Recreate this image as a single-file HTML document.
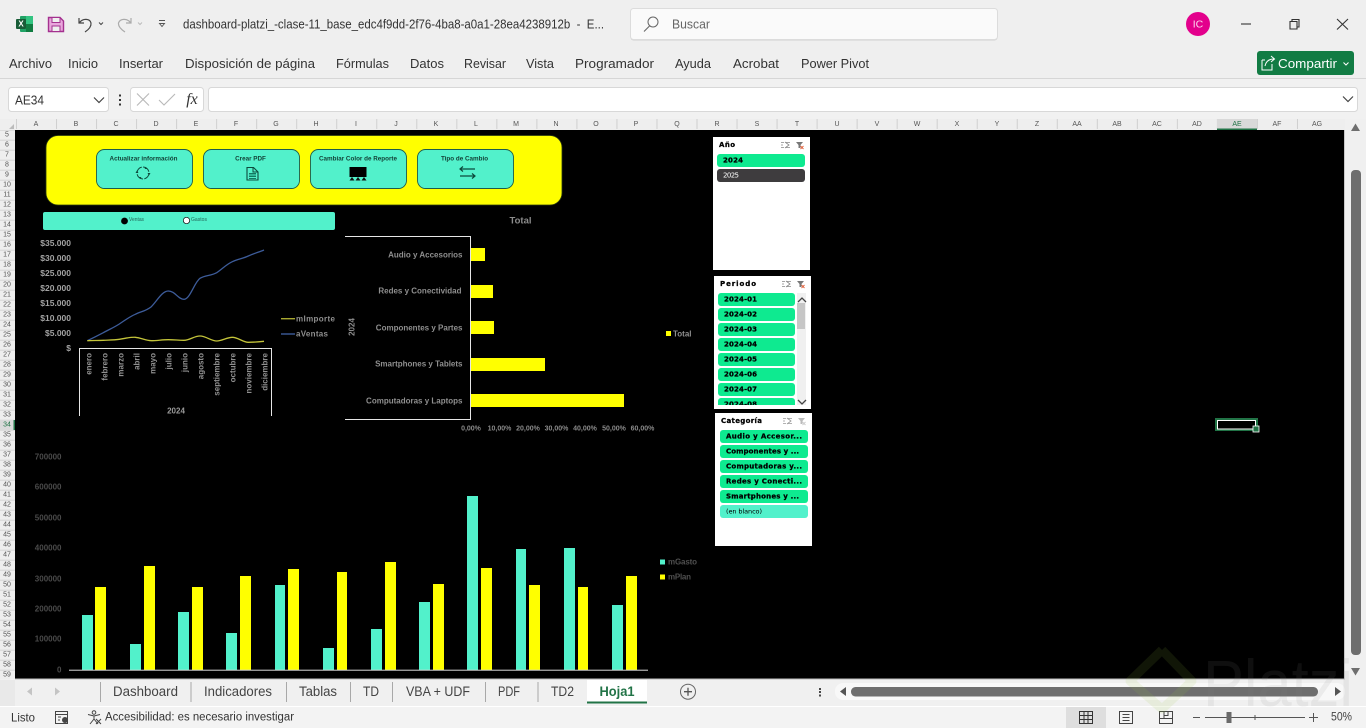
<!DOCTYPE html>
<html lang="es"><head><meta charset="utf-8"><title>Excel</title>
<style>
html,body{margin:0;padding:0;width:1366px;height:728px;overflow:hidden;background:#f0f0f0}
svg{display:block;font-family:"Liberation Sans",sans-serif}
text{dominant-baseline:central}
.ui{font-size:13px;fill:#3a3a3a}
.m text{font-size:13px;fill:#333}
.c text{font-size:7px;fill:#555;text-anchor:middle}
.r text{font-size:7px;fill:#555;text-anchor:middle}
.ax text{font-size:8.5px;font-weight:bold;fill:#a2a2a2}
.lb text{font-size:8px;font-weight:bold;fill:#8f8f8f}
.bt{font-size:6.3px;font-weight:bold;fill:#123f35;text-anchor:middle}
.sl{font-family:"DejaVu Sans",sans-serif;font-size:7px;font-weight:bold;fill:#000;stroke:#000;stroke-width:.25px}
.sb{fill:#0eea90}
.tb text{font-size:13.5px;fill:#444;text-anchor:middle}
</style></head><body>
<svg width="1366" height="728" viewBox="0 0 1366 728" xmlns="http://www.w3.org/2000/svg">
<defs>
<pattern id="colp" x="16" y="0" width="40.03" height="20" patternUnits="userSpaceOnUse"><rect width="1" height="20" fill="#cfcfcf"/></pattern>
<pattern id="rowp" x="0" y="129.7" width="20" height="10" patternUnits="userSpaceOnUse"><rect width="20" height="1" fill="#d4d4d4"/></pattern>
<clipPath id="perclip"><rect x="714" y="290" width="84" height="115"/></clipPath>
</defs>

<!-- title bar + ribbon background -->
<rect width="1366" height="78" fill="#efefef"/>
<rect y="78" width="1366" height="1" fill="#d6d6d6"/>
<rect y="79" width="1366" height="40" fill="#f1f1f1"/>

<!-- excel logo -->
<rect x="20" y="16" width="13" height="16" rx="1" fill="#21a366"/>
<rect x="26" y="16" width="7" height="8" fill="#33c481"/>
<rect x="26" y="24" width="7" height="8" fill="#107c41"/>
<rect x="16" y="19" width="10" height="10" rx="1" fill="#185c37"/>
<text x="21" y="24" font-size="8" font-weight="bold" fill="#fff" text-anchor="middle">X</text>
<!-- save -->
<path d="M48.500 17.500H60L63.500 21V31.500H48.500Z" fill="#e9a6dc" stroke="#a4318f" stroke-width="1.400"/>
<rect x="52" y="17.500" width="8" height="5" fill="#efefef" stroke="#a4318f"/>
<rect x="52" y="26" width="8" height="5.500" fill="#efefef" stroke="#a4318f"/>
<!-- undo/redo -->
<path d="M79 18V23H84M79.500 22.500C83 18 90 18.500 91 23C91.500 27 88 30 85 32" fill="none" stroke="#444" stroke-width="1.200"/>
<path d="M99 22.500L101 24.500L103 22.500" fill="none" stroke="#444"/>
<path d="M131 18V23H126M130.500 22.500C127 18 120 18.500 118.500 23C118 27 122 30 125 32" fill="none" stroke="#aaa" stroke-width="1.200"/>
<path d="M138 22.500L140 24.500L142 22.500" fill="none" stroke="#bbb"/>
<path d="M159 20.500H165M159.500 23.500H164.500L162 26.500Z" fill="none" stroke="#555" stroke-width=".9"/>
<text x="183" y="24.500" font-size="12.500" fill="#333" textLength="421" lengthAdjust="spacingAndGlyphs">dashboard-platzi_-clase-11_base_edc4f9dd-2f76-4ba8-a0a1-28ea4238912b &#160;- &#160;E...</text>

<!-- search -->
<rect x="630.500" y="9.500" width="367" height="31" rx="3" fill="#d2d2d2"/>
<rect x="630.500" y="8.500" width="367" height="31" rx="3" fill="#fafafa" stroke="#dcdcdc"/>
<circle cx="653" cy="22" r="5" fill="none" stroke="#666" stroke-width="1"/>
<path d="M649.500 26L644 31.500" stroke="#666" stroke-width="1.100"/>
<text x="672" y="24.500" font-size="12.500" fill="#666" textLength="38" lengthAdjust="spacingAndGlyphs">Buscar</text>
<!-- avatar + window controls -->
<ellipse cx="1198" cy="24" rx="12" ry="12" fill="#e3008c"/>
<text x="1198" y="24.500" font-size="10.500" fill="#fbd5ec" text-anchor="middle">IC</text>
<path d="M1241 24H1251" stroke="#333" stroke-width="1.100"/>
<path d="M1290 21.500H1297V29H1290ZM1292 21.500V19.500H1299V27H1297" fill="none" stroke="#333" stroke-width="1.100"/>
<path d="M1337 19L1348 29.500M1348 19L1337 29.500" stroke="#333" stroke-width="1.100"/>

<!-- menu -->
<g class="m">
<text x="9" y="63.500" textLength="43" lengthAdjust="spacingAndGlyphs">Archivo</text>
<text x="68" y="63.500" textLength="30" lengthAdjust="spacingAndGlyphs">Inicio</text>
<text x="119" y="63.500" textLength="44" lengthAdjust="spacingAndGlyphs">Insertar</text>
<text x="185" y="63.500" textLength="130" lengthAdjust="spacingAndGlyphs">Disposición de página</text>
<text x="336" y="63.500" textLength="53" lengthAdjust="spacingAndGlyphs">Fórmulas</text>
<text x="410" y="63.500" textLength="34" lengthAdjust="spacingAndGlyphs">Datos</text>
<text x="464" y="63.500" textLength="42" lengthAdjust="spacingAndGlyphs">Revisar</text>
<text x="526" y="63.500" textLength="28" lengthAdjust="spacingAndGlyphs">Vista</text>
<text x="575" y="63.500" textLength="79" lengthAdjust="spacingAndGlyphs">Programador</text>
<text x="675" y="63.500" textLength="36" lengthAdjust="spacingAndGlyphs">Ayuda</text>
<text x="733" y="63.500" textLength="46" lengthAdjust="spacingAndGlyphs">Acrobat</text>
<text x="801" y="63.500" textLength="68" lengthAdjust="spacingAndGlyphs">Power Pivot</text>
</g>
<!-- compartir -->
<rect x="1257" y="51" width="97" height="24" rx="3" fill="#127c44"/>
<path d="M1262 60V70H1272V64M1262 60H1265M1265 66C1266 61 1269 59 1274 59M1271 56L1274.500 59L1271 62" fill="none" stroke="#fff" stroke-width="1"/>
<text x="1278" y="63.500" font-size="13" fill="#fff" textLength="59" lengthAdjust="spacingAndGlyphs">Compartir</text>
<path d="M1343.500 62.500L1346 65L1348.500 62.500" fill="none" stroke="#fff"/>

<!-- formula bar -->
<rect x="8.500" y="87.500" width="100" height="24" rx="3" fill="#fff" stroke="#d8d8d8"/>
<text x="15" y="100" font-size="13" fill="#333" textLength="29" lengthAdjust="spacingAndGlyphs">AE34</text>
<path d="M94 97.500L99 102.500L104 97.500" fill="none" stroke="#444" stroke-width="1.200"/>
<path d="M120 94.500v2M120 99v2M120 103.500v2" stroke="#333" stroke-width="2"/>
<rect x="130.500" y="87.500" width="73" height="24" rx="3" fill="#fff" stroke="#d8d8d8"/>
<path d="M137 93.500L149 105.500M149 93.500L137 105.500" stroke="#b8b8b8" stroke-width="1.100"/>
<path d="M159 100L164 105L175 94" fill="none" stroke="#b8b8b8" stroke-width="1.100"/>
<text x="192" y="99.500" font-size="16" font-style="italic" fill="#333" font-family="Liberation Serif" text-anchor="middle">fx</text>
<rect x="208.500" y="87.500" width="1149" height="24" rx="3" fill="#fff" stroke="#d8d8d8"/>
<path d="M1343 96.500L1348 101.500L1353 96.500" fill="none" stroke="#444" stroke-width="1.200"/>

<!-- col headers -->
<rect x="0" y="119" width="1345" height="11" fill="#eeeeee"/>
<rect x="16" y="119" width="1320" height="10" fill="url(#colp)"/>
<path d="M9 129L14 129L14 124Z" fill="#bbb"/>
<rect x="1217" y="119" width="40" height="11" fill="#d9d9d9"/>
<rect x="1217" y="128.500" width="40" height="1.500" fill="#217346"/>
<g class="c">
<text x="36" y="124.500">A</text><text x="76" y="124.500">B</text><text x="116" y="124.500">C</text><text x="156" y="124.500">D</text><text x="196" y="124.500">E</text><text x="236" y="124.500">F</text><text x="276" y="124.500">G</text><text x="316" y="124.500">H</text><text x="356" y="124.500">I</text><text x="396" y="124.500">J</text><text x="436" y="124.500">K</text><text x="476" y="124.500">L</text><text x="516" y="124.500">M</text><text x="556" y="124.500">N</text><text x="596" y="124.500">O</text><text x="636" y="124.500">P</text><text x="677" y="124.500">Q</text><text x="717" y="124.500">R</text><text x="757" y="124.500">S</text><text x="797" y="124.500">T</text><text x="837" y="124.500">U</text><text x="877" y="124.500">V</text><text x="917" y="124.500">W</text><text x="957" y="124.500">X</text><text x="997" y="124.500">Y</text><text x="1037" y="124.500">Z</text><text x="1077" y="124.500">AA</text><text x="1117" y="124.500">AB</text><text x="1157" y="124.500">AC</text><text x="1197" y="124.500">AD</text><text x="1237" y="124.500" style="fill:#217346">AE</text><text x="1277" y="124.500">AF</text><text x="1317" y="124.500">AG</text>
</g>

<!-- row headers -->
<rect x="0" y="130" width="15" height="549" fill="#eeeeee"/>
<rect x="0" y="130" width="15" height="549" fill="url(#rowp)"/>
<rect x="0" y="420" width="15" height="10" fill="#d9d9d9"/>
<rect x="13.500" y="420" width="1.500" height="10" fill="#217346"/>
<g class="r">
<text x="7" y="135">5</text><text x="7" y="145">6</text><text x="7" y="155">7</text><text x="7" y="165">8</text><text x="7" y="175">9</text><text x="7" y="185">10</text><text x="7" y="195">11</text><text x="7" y="205">12</text><text x="7" y="215">13</text><text x="7" y="225">14</text><text x="7" y="235">15</text><text x="7" y="245">16</text><text x="7" y="255">17</text><text x="7" y="265">18</text><text x="7" y="275">19</text><text x="7" y="285">20</text><text x="7" y="295">21</text><text x="7" y="305">22</text><text x="7" y="315">23</text><text x="7" y="325">24</text><text x="7" y="335">25</text><text x="7" y="345">26</text><text x="7" y="355">27</text><text x="7" y="365">28</text><text x="7" y="375">29</text><text x="7" y="385">30</text><text x="7" y="395">31</text><text x="7" y="405">32</text><text x="7" y="415">33</text><text x="7" y="425" style="fill:#217346">34</text><text x="7" y="435">35</text><text x="7" y="445">36</text><text x="7" y="455">37</text><text x="7" y="465">38</text><text x="7" y="475">39</text><text x="7" y="485">40</text><text x="7" y="495">41</text><text x="7" y="505">42</text><text x="7" y="515">43</text><text x="7" y="525">44</text><text x="7" y="535">45</text><text x="7" y="545">46</text><text x="7" y="555">47</text><text x="7" y="565">48</text><text x="7" y="575">49</text><text x="7" y="585">50</text><text x="7" y="595">51</text><text x="7" y="605">52</text><text x="7" y="615">53</text><text x="7" y="625">54</text><text x="7" y="635">55</text><text x="7" y="645">56</text><text x="7" y="655">57</text><text x="7" y="665">58</text><text x="7" y="675">59</text>
</g>

<!-- sheet -->
<rect x="15" y="130" width="1330" height="549" fill="#000"/>
<rect x="15" y="678.500" width="1330" height="1" fill="#bdbdbd"/>

<!-- yellow panel -->
<rect x="46" y="135.500" width="516" height="69.500" rx="12" fill="#ffff00" stroke="#2a3a10" stroke-width=".8"/>
<g fill="#52f1cb" stroke="#1d5c4b" stroke-width=".9">
<rect x="96.500" y="149.500" width="96" height="39" rx="8"/>
<rect x="203.500" y="149.500" width="96" height="39" rx="8"/>
<rect x="310.500" y="149.500" width="96" height="39" rx="8"/>
<rect x="417.500" y="149.500" width="96" height="39" rx="8"/>
</g>
<text class="bt" x="143.500" y="159">Actualizar información</text>
<text class="bt" x="250.500" y="159">Crear PDF</text>
<text class="bt" x="358" y="159">Cambiar Color de Reporte</text>
<text class="bt" x="464.500" y="159">Tipo de Cambio</text>
<!-- refresh -->
<circle cx="143" cy="173" r="6" fill="none" stroke="#0d4a3c" stroke-width="1" stroke-dasharray="8 1.400"/>
<path d="M137 170.500l-1.500 2.500h3zM149 175.500l1.500-2.500h-3zM146 167l1 2-2.500 0zM140 179l-1-2 2.500 0z" fill="#0d4a3c"/>
<!-- doc -->
<path d="M247 167.500H253.500L258 172V180H247Z" fill="#52f1cb" stroke="#0d4a3c" stroke-width="1.100"/>
<path d="M253 168V172H258" fill="none" stroke="#0d4a3c"/>
<path d="M249 173h7v1.500h-7zM249 175.500h7v1.500h-7zM249 178h7v1h-7z" fill="#127a62"/>
<!-- color -->
<rect x="349.500" y="167" width="17" height="10" fill="#000"/>
<path d="M352 177l2.500 3.500h-5zM358 177l2.500 3.500h-5zM364 177l2.500 3.500h-5z" fill="#111"/>
<!-- arrows -->
<path d="M460 169H475M463 166.500L460 169L463 171.500M460 176H475M472 173.500L475 176L472 178.500" fill="none" stroke="#0d4a3c" stroke-width="1.200"/>

<!-- ventas/gastos strip -->
<rect x="43" y="212" width="292" height="18" rx="2" fill="#52f1cb"/>
<circle cx="124.500" cy="221" r="3.400" fill="#000"/>
<circle cx="186.500" cy="220.500" r="3.200" fill="#fff" stroke="#000" stroke-width=".7"/>
<text x="129" y="220" font-size="5" fill="#23675a" textLength="15" lengthAdjust="spacingAndGlyphs">Ventas</text>
<text x="191" y="220" font-size="5" fill="#23675a" textLength="16" lengthAdjust="spacingAndGlyphs">Gastos</text>

<!-- line chart -->
<g class="ax" text-anchor="end">
<text x="71" y="243">$35.000</text><text x="71" y="258">$30.000</text><text x="71" y="273">$25.000</text><text x="71" y="288">$20.000</text><text x="71" y="303">$15.000</text><text x="71" y="318">$10.000</text><text x="71" y="333">$5.000</text><text x="71" y="348">$</text>
</g>
<path d="M87.300 340.700C93 338 98 335.500 103.300 332.700C109 329.500 114 327.500 119.300 324C125 320 130 316.500 135.300 314.300C141 311.500 146 311 151.300 306.700C157 301 162 291 168.300 291C175 291 178 299.300 184 299.300C190 299.300 194 283 200 278.300C205 275 211 276 216.700 272.700C222 269 227 264 232.300 261.700C238 259 243 258.500 248.300 256C254 253.500 259 252 264 250" fill="none" stroke="#3d5c9a" stroke-width="1.300"/>
<path d="M87.300 340.700C92 340.500 98 340.500 103.300 340.300C109 340 114 340 119.300 339.300C125 338.500 130 337 135.300 337.300C141 337.800 146 340.700 151.300 340.700C157 340.700 162 339.700 168.300 339.700C175 339.700 178 340.300 184 340.300C190 340.300 194 336 200 336C206 336 211 341 216.700 341C222 341 227 337.300 232.300 337.300C238 337.300 243 342.300 248.300 342.300C254 342.300 259 341.800 264 341.300" fill="none" stroke="#c4c43a" stroke-width="1.300"/>
<path d="M79.500 416V348.500H271.500V416M79.500 398v1M271.500 398v1" fill="none" stroke="#e6e6e6" stroke-width="1"/>
<g class="lb" text-anchor="end">
<text transform="translate(89 353) rotate(-90)">enero</text>
<text transform="translate(105 353) rotate(-90)">febrero</text>
<text transform="translate(121 353) rotate(-90)">marzo</text>
<text transform="translate(137 353) rotate(-90)">abril</text>
<text transform="translate(153 353) rotate(-90)">mayo</text>
<text transform="translate(169 353) rotate(-90)">julio</text>
<text transform="translate(185 353) rotate(-90)">junio</text>
<text transform="translate(201 353) rotate(-90)">agosto</text>
<text transform="translate(217 353) rotate(-90)">septiembre</text>
<text transform="translate(233 353) rotate(-90)">octubre</text>
<text transform="translate(249 353) rotate(-90)">noviembre</text>
<text transform="translate(265 353) rotate(-90)">diciembre</text>
</g>
<text x="176" y="411" font-size="8" font-weight="bold" fill="#9a9a9a" text-anchor="middle">2024</text>
<path d="M281 318.700H295" stroke="#a8a830" stroke-width="1.400"/>
<path d="M281 334H295" stroke="#3d5c9a" stroke-width="1.400"/>
<text x="296" y="319" font-size="8" font-weight="bold" fill="#8f8f8f" textLength="39" lengthAdjust="spacing">mImporte</text>
<text x="296" y="334" font-size="8" font-weight="bold" fill="#8f8f8f" textLength="32" lengthAdjust="spacing">aVentas</text>

<!-- horizontal bars -->
<text x="520.500" y="221" font-size="9.500" font-weight="bold" fill="#8c8c8c" text-anchor="middle">Total</text>
<path d="M345 236.500H470.500V419.500H345" fill="none" stroke="#e6e6e6" stroke-width="1"/>
<g fill="#ffff00">
<rect x="471" y="248" width="14" height="13"/>
<rect x="471" y="285" width="22" height="13"/>
<rect x="471" y="321" width="23" height="13"/>
<rect x="471" y="358" width="74" height="13"/>
<rect x="471" y="394" width="153" height="13"/>
</g>
<g class="lb" text-anchor="end">
<text x="462.500" y="255">Audio y Accesorios</text>
<text x="461.500" y="291">Redes y Conectividad</text>
<text x="462.500" y="328">Componentes y Partes</text>
<text x="462.500" y="364">Smartphones y Tablets</text>
<text x="462.500" y="401">Computadoras y Laptops</text>
</g>
<text transform="translate(352 327) rotate(-90)" font-size="8" font-weight="bold" fill="#8f8f8f" text-anchor="middle">2024</text>
<g font-size="7" font-weight="bold" fill="#8a8a8a" text-anchor="middle">
<text x="471" y="429">0,00%</text><text x="499.500" y="429">10,00%</text><text x="528" y="429">20,00%</text><text x="556.500" y="429">30,00%</text><text x="585" y="429">40,00%</text><text x="614" y="429">50,00%</text><text x="642.500" y="429">60,00%</text>
</g>
<rect x="666" y="331" width="5" height="5" fill="#ffff00"/>
<text x="673" y="334" font-size="8" font-weight="bold" fill="#8f8f8f">Total</text>

<!-- bottom chart -->
<g font-size="8" font-weight="bold" fill="#4a4a4a" text-anchor="end">
<text x="61.500" y="457">700000</text><text x="61.500" y="487">600000</text><text x="61.500" y="518">500000</text><text x="61.500" y="548">400000</text><text x="61.500" y="579">300000</text><text x="61.500" y="609">200000</text><text x="61.500" y="639">100000</text><text x="61.500" y="670">0</text>
</g>
<g fill="#52f1cb">
<rect x="82" y="615" width="11" height="55"/><rect x="130" y="644" width="11" height="26"/><rect x="178" y="612" width="11" height="58"/><rect x="226" y="633" width="11" height="37"/><rect x="275" y="585" width="10" height="85"/><rect x="323" y="648" width="11" height="22"/><rect x="371" y="629" width="11" height="41"/><rect x="419" y="602" width="11" height="68"/><rect x="467" y="496" width="11" height="174"/><rect x="516" y="549" width="10" height="121"/><rect x="564" y="548" width="11" height="122"/><rect x="612" y="605" width="11" height="65"/>
</g>
<g fill="#ffff00">
<rect x="95" y="587" width="11" height="83"/><rect x="144" y="566" width="11" height="104"/><rect x="192" y="587" width="11" height="83"/><rect x="240" y="576" width="11" height="94"/><rect x="288" y="569" width="11" height="101"/><rect x="337" y="572" width="10" height="98"/><rect x="385" y="562" width="11" height="108"/><rect x="433" y="584" width="11" height="86"/><rect x="481" y="568" width="11" height="102"/><rect x="529" y="585" width="11" height="85"/><rect x="578" y="587" width="10" height="83"/><rect x="626" y="576" width="11" height="94"/>
</g>
<rect x="69" y="669.700" width="579" height="1" fill="#d8d8d8"/>
<rect x="660" y="559.500" width="5" height="5" fill="#52f1cb"/>
<rect x="660" y="574.500" width="5" height="5" fill="#ffff00"/>
<text x="668" y="562" font-size="8" font-weight="bold" fill="#4f4f4f" textLength="29" lengthAdjust="spacing">mGasto</text>
<text x="668" y="577" font-size="8" font-weight="bold" fill="#4f4f4f" textLength="23" lengthAdjust="spacing">mPlan</text>

<!-- slicer Año -->
<rect x="713" y="137" width="97" height="133" fill="#fff"/>
<text class="sl" x="719" y="145" textLength="16" lengthAdjust="spacing">Año</text>
<path d="M781 142.500h3M781 145h2M781 147.500h3M785 142l4 3-4 3M786 142.500h4M786 147.500h4" fill="none" stroke="#888" stroke-width=".8"/>
<path d="M796 142h7l-2.500 3v3h-2v-3z" fill="#777"/><path d="M800.500 146l3 3M803.500 146l-3 3" stroke="#e0603a" stroke-width=".9"/>
<rect x="717" y="154" width="88" height="13" rx="3" class="sb"/>
<rect x="717" y="169" width="88" height="13" rx="3" fill="#3e3c3e"/>
<text class="sl" x="723" y="160.700" textLength="20" lengthAdjust="spacing">2024</text>
<text class="sl" x="723" y="175.700" textLength="16" style="fill:#fff;stroke:none;font-weight:normal" lengthAdjust="spacing">2025</text>

<!-- slicer Periodo -->
<rect x="714" y="276" width="97" height="133" fill="#fff"/>
<text class="sl" x="720" y="284" textLength="36" lengthAdjust="spacing">Periodo</text>
<path d="M782 281.500h3M782 284h2M782 286.500h3M786 281l4 3-4 3M787 281.500h4M787 286.500h4" fill="none" stroke="#888" stroke-width=".8"/>
<path d="M797 281h7l-2.500 3v3h-2v-3z" fill="#777"/><path d="M801.500 285l3 3M804.500 285l-3 3" stroke="#e0603a" stroke-width=".9"/>
<g clip-path="url(#perclip)">
<g class="sb">
<rect x="718" y="293" width="77" height="13" rx="3"/><rect x="718" y="308" width="77" height="13" rx="3"/><rect x="718" y="323" width="77" height="13" rx="3"/><rect x="718" y="338" width="77" height="13" rx="3"/><rect x="718" y="353" width="77" height="13" rx="3"/><rect x="718" y="368" width="77" height="13" rx="3"/><rect x="718" y="383" width="77" height="13" rx="3"/><rect x="718" y="398" width="77" height="13" rx="3"/>
</g>
<text class="sl" x="724" y="299.500" textLength="33" lengthAdjust="spacing">2024-01</text>
<text class="sl" x="724" y="314.500" textLength="33" lengthAdjust="spacing">2024-02</text>
<text class="sl" x="724" y="329.500" textLength="33" lengthAdjust="spacing">2024-03</text>
<text class="sl" x="724" y="344.500" textLength="33" lengthAdjust="spacing">2024-04</text>
<text class="sl" x="724" y="359.500" textLength="33" lengthAdjust="spacing">2024-05</text>
<text class="sl" x="724" y="374.500" textLength="33" lengthAdjust="spacing">2024-06</text>
<text class="sl" x="724" y="389.500" textLength="33" lengthAdjust="spacing">2024-07</text>
<text class="sl" x="724" y="404.500" textLength="33" lengthAdjust="spacing">2024-08</text>
</g>
<rect x="797" y="293" width="9" height="112" fill="#f0f0f0"/>
<rect x="797" y="303" width="8" height="26" fill="#c6c6c6"/>
<path d="M798 302L802 298L806 302M798 400L802 404L806 400" fill="none" stroke="#444" stroke-width="1.300"/>

<!-- slicer Categoria -->
<rect x="715" y="413" width="97" height="133" fill="#fff"/>
<text class="sl" x="721" y="421" textLength="41" lengthAdjust="spacing">Categoría</text>
<path d="M783 418.500h3M783 421h2M783 423.500h3M787 418l4 3-4 3M788 418.500h4M788 423.500h4" fill="none" stroke="#999" stroke-width=".8"/>
<path d="M798 418h7l-2.500 3v3h-2v-3z" fill="#bbb"/><path d="M802.500 422l3 3M805.500 422l-3 3" stroke="#ccc" stroke-width=".9"/>
<g class="sb">
<rect x="720" y="430" width="88" height="13" rx="3"/><rect x="720" y="445" width="88" height="13" rx="3"/><rect x="720" y="460" width="88" height="13" rx="3"/><rect x="720" y="475" width="88" height="13" rx="3"/><rect x="720" y="490" width="88" height="13" rx="3"/>
</g>
<rect x="720" y="505" width="88" height="13" rx="3" fill="#52f1cb"/>
<text class="sl" x="726" y="436.700" textLength="76" lengthAdjust="spacing">Audio y Accesor...</text>
<text class="sl" x="726" y="451.700" textLength="73" lengthAdjust="spacing">Componentes y ...</text>
<text class="sl" x="726" y="466.700" textLength="76" lengthAdjust="spacing">Computadoras y...</text>
<text class="sl" x="726" y="481.700" textLength="76" lengthAdjust="spacing">Redes y Conecti...</text>
<text class="sl" x="726" y="496.700" textLength="73" lengthAdjust="spacing">Smartphones y ...</text>
<text class="sl" x="726" y="511.700" textLength="36" style="font-weight:normal;stroke:none;font-size:6.500px" lengthAdjust="spacing">(en blanco)</text>

<!-- selected cell -->
<rect x="1216" y="419" width="41" height="11" fill="none" stroke="#217346" stroke-width="2"/>
<rect x="1217.500" y="420.500" width="38" height="8.500" fill="none" stroke="#fff" stroke-width="1"/>
<rect x="1253" y="426" width="6" height="6" fill="#217346" stroke="#fff" stroke-width=".8"/>

<!-- vertical scrollbar -->
<rect x="1345" y="119" width="21" height="561" fill="#f0f0f0"/>
<rect x="1344" y="130" width="1" height="549" fill="#c8c8c8"/>
<path d="M1351 131L1355.500 123.500L1360 131Z" fill="#6e6e6e"/>
<rect x="1351" y="170" width="10" height="485" rx="4" fill="#6e6e6e"/>
<path d="M1351 668L1355.500 675.500L1360 668Z" fill="#6e6e6e"/>

<!-- tab bar -->
<rect y="679.500" width="1366" height="27" fill="#f0f0f0"/>
<rect x="0" y="680" width="15" height="26" fill="#e9e9e9"/>
<rect y="706" width="1366" height="1" fill="#fff"/>
<path d="M32 687.500L27 691.500L32 695.500Z" fill="#c4c4c4"/>
<path d="M55 687.500L60 691.500L55 695.500Z" fill="#c4c4c4"/>
<path d="M100.500 682V702M191 682V702M286.500 682V702M350.500 682V702M392.500 682V702M485.500 682V702M538 682V702" stroke="#a8a8a8"/>
<rect x="587" y="680" width="60" height="23" fill="#fff"/>
<rect x="587" y="701.500" width="60" height="2" fill="#217346"/>
<g class="tb">
<text x="145.500" y="691.500" textLength="65" lengthAdjust="spacingAndGlyphs">Dashboard</text>
<text x="238" y="691.500" textLength="68" lengthAdjust="spacingAndGlyphs">Indicadores</text>
<text x="318" y="691.500" textLength="38" lengthAdjust="spacingAndGlyphs">Tablas</text>
<text x="371" y="691.500" textLength="16" lengthAdjust="spacingAndGlyphs">TD</text>
<text x="438" y="691.500" textLength="64" lengthAdjust="spacingAndGlyphs">VBA + UDF</text>
<text x="509" y="691.500" textLength="22" lengthAdjust="spacingAndGlyphs">PDF</text>
<text x="562.500" y="691.500" textLength="23" lengthAdjust="spacingAndGlyphs">TD2</text>
<text x="617" y="691.500" textLength="35" lengthAdjust="spacingAndGlyphs" style="font-weight:bold;fill:#217346">Hoja1</text>
</g>
<circle cx="688" cy="691.700" r="7.500" fill="none" stroke="#666"/>
<path d="M684 691.700H692M688 687.700V695.700" stroke="#555" stroke-width="1.300"/>
<path d="M820 688v2M820 691v2M820 694.500v2" stroke="#333" stroke-width="1.800"/>
<rect x="835" y="683" width="510" height="17" rx="8" fill="#f8f8f8"/>
<path d="M846 687V696L840 691.500Z" fill="#555"/>
<rect x="851" y="687" width="467" height="9.500" rx="4.500" fill="#6e6e6e"/>
<path d="M1335 687V696L1341 691.500Z" fill="#555"/>

<!-- status bar -->
<rect y="707" width="1366" height="21" fill="#f3f3f3"/>
<text x="11" y="717.500" font-size="12" fill="#333" textLength="24" lengthAdjust="spacingAndGlyphs">Listo</text>
<rect x="55.500" y="711.500" width="12" height="12" fill="none" stroke="#444"/>
<path d="M55.500 714.500H67.500M58 717h3M58 720h2" stroke="#444"/>
<circle cx="65" cy="720" r="3" fill="#444"/>
<circle cx="94" cy="712.500" r="1.800" fill="none" stroke="#444"/>
<path d="M88 714.500L94 716L100 714.500M94 716V719L90 724M94 719L98 724M96 719L101 724M101 719L96 724" fill="none" stroke="#444"/>
<text x="105" y="717.500" font-size="11.500" fill="#333" textLength="189" lengthAdjust="spacingAndGlyphs">Accesibilidad: es necesario investigar</text>
<rect x="1066" y="707" width="40" height="21" fill="#dedede"/>
<path d="M1079.500 711.500H1092.500V723.500H1079.500ZM1079.500 715.500H1092.500M1079.500 719.500H1092.500M1084 711.500V723.500M1088 711.500V723.500" fill="none" stroke="#333"/>
<path d="M1119.500 711.500H1132.500V723.500H1119.500ZM1122.500 714.500H1129.500M1122.500 717.500H1129.500M1122.500 720.500H1129.500" fill="none" stroke="#444"/>
<path d="M1159.500 711.500H1172.500V723.500H1159.500ZM1159.500 718.500H1172.500M1164 711.500V718.500M1168 711.500V715.500H1164" fill="none" stroke="#444"/>
<path d="M1193 717.500H1200M1205 717.500H1305M1255 715V720M1309 717.500H1318M1313.500 713V722" stroke="#555"/>
<rect x="1226.500" y="712" width="5" height="11" fill="#6a6a6a"/>
<text x="1331" y="717.500" font-size="11.500" fill="#444" textLength="21" lengthAdjust="spacingAndGlyphs">50%</text>

<!-- watermark -->
<g opacity=".11">
<path d="M1162 650L1192 681L1162 709L1130 681L1162 650" fill="none" stroke="#98ca3f" stroke-width="9" stroke-linejoin="round"/>
<text x="1203" y="683" font-size="66" fill="#888" textLength="150" lengthAdjust="spacingAndGlyphs">Platzi</text>
</g>
</svg>
</body></html>
